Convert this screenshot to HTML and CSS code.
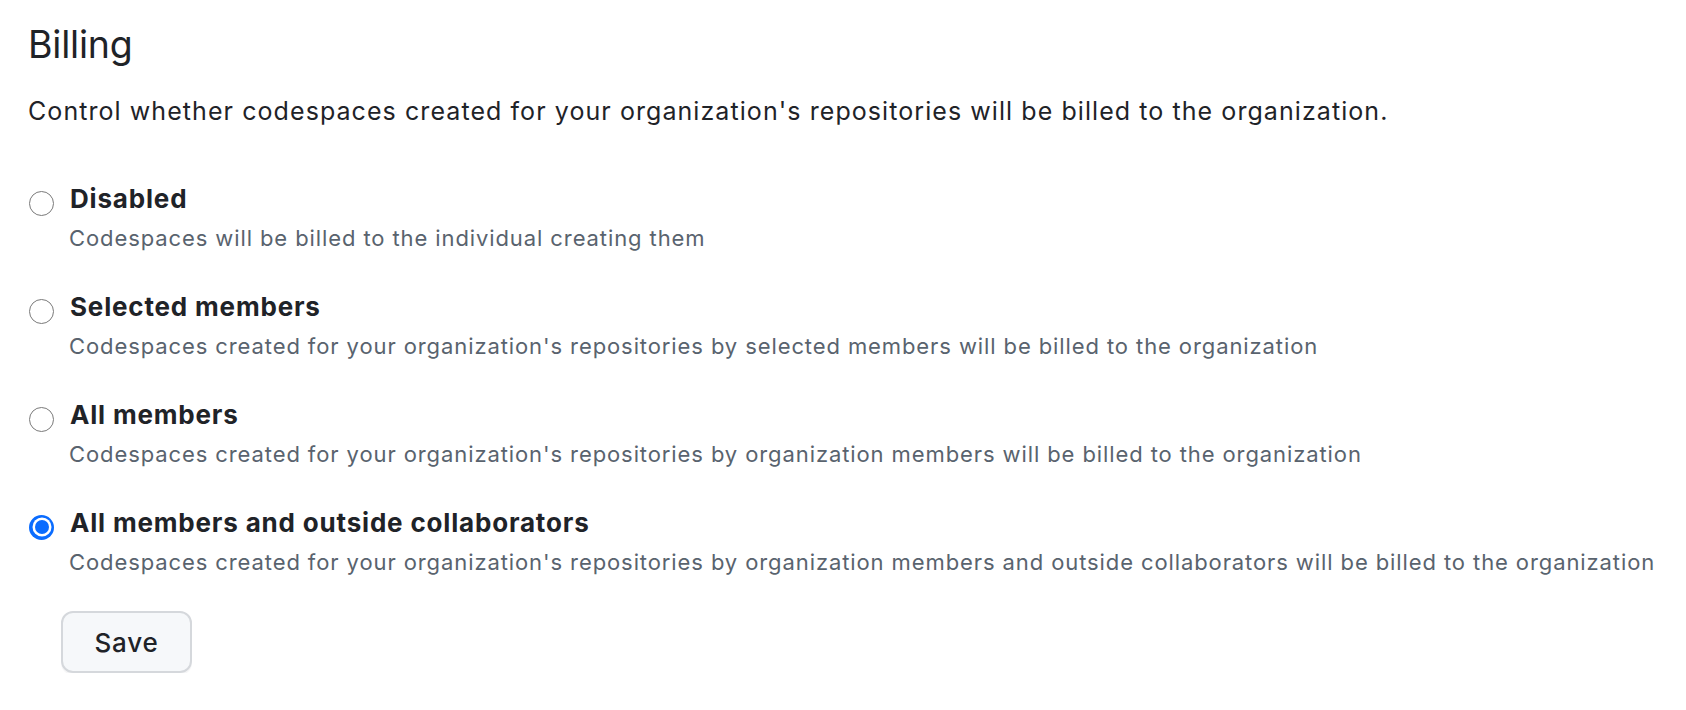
FILE: index.html
```html
<!DOCTYPE html>
<html lang="en">
<head>
<meta charset="utf-8">
<title>Billing</title>
<link rel="stylesheet" href="styles.css">
</head>
<body>
<main class="page">
  <h2 class="heading">Billing</h2>
  <p class="lead">Control whether codespaces created for your organization's repositories will be billed to the organization.</p>
  <div class="options">
    <label class="option">
      <span class="radio"></span>
      <span class="text">
        <span class="title">Disabled</span>
        <span class="note">Codespaces will be billed to the individual creating them</span>
      </span>
    </label>
    <label class="option">
      <span class="radio"></span>
      <span class="text">
        <span class="title">Selected members</span>
        <span class="note">Codespaces created for your organization's repositories by selected members will be billed to the organization</span>
      </span>
    </label>
    <label class="option">
      <span class="radio"></span>
      <span class="text">
        <span class="title">All members</span>
        <span class="note">Codespaces created for your organization's repositories by organization members will be billed to the organization</span>
      </span>
    </label>
    <label class="option">
      <span class="radio checked"></span>
      <span class="text">
        <span class="title">All members and outside collaborators</span>
        <span class="note">Codespaces created for your organization's repositories by organization members and outside collaborators will be billed to the organization</span>
      </span>
    </label>
  </div>
  <button class="btn" type="button">Save</button>
</main>
</body>
</html>
```

FILE: styles.css
```css
* { box-sizing: border-box; }
html, body { margin: 0; padding: 0; background: #ffffff; }
body {
  font-family: Inter, "Noto Sans", "Liberation Sans", sans-serif;
  color: #1f2328;
}
.page {
  display: flex;
  flex-direction: column;
  align-items: flex-start;
  padding: 20px 28px 0 28px;
}
.heading {
  margin: 0;
  font-size: 37.5px;
  font-weight: 400;
  line-height: 50px;
  letter-spacing: -0.2px;
}
.lead {
  margin: 23px 0 0 0;
  font-size: 25px;
  line-height: 36px;
  letter-spacing: 1.07px;
  white-space: nowrap;
}
.options {
  display: flex;
  flex-direction: column;
  gap: 36px;
  margin-top: 53px;
}
.option {
  display: flex;
  align-items: flex-start;
  gap: 16px;
}
.radio {
  flex: none;
  width: 25px;
  height: 25px;
  margin-top: 8.5px;
  margin-left: 1px;
  border-radius: 50%;
  border: 1.5px solid #7a7a7a;
  background: #ffffff;
}
.radio.checked {
  border: none;
  background: #0a6cff;
  display: flex;
  align-items: center;
  justify-content: center;
}
.radio.checked::after {
  content: "";
  width: 14px;
  height: 14px;
  border-radius: 50%;
  background: #0a6cff;
  box-shadow: 0 0 0 2.5px #ffffff;
}
.text {
  display: flex;
  flex-direction: column;
  gap: 6px;
}
.title {
  font-size: 26px;
  font-weight: 700;
  line-height: 34px;
  letter-spacing: 0.82px;
  white-space: nowrap;
}
.note {
  margin-left: -1px;
  font-size: 22px;
  line-height: 32px;
  letter-spacing: 0.9px;
  color: #59636e;
  white-space: nowrap;
}
.btn {
  margin: 33px 0 0 33px;
  width: 131px;
  height: 62px;
  font-family: inherit;
  font-size: 26px;
  font-weight: 500;
  letter-spacing: 0.8px;
  color: #1f2328;
  background: #f6f8fa;
  border: 2px solid #d5d8dc;
  border-radius: 12px;
  box-shadow: 0 2px 0 rgba(31, 35, 40, 0.04);
}
```
